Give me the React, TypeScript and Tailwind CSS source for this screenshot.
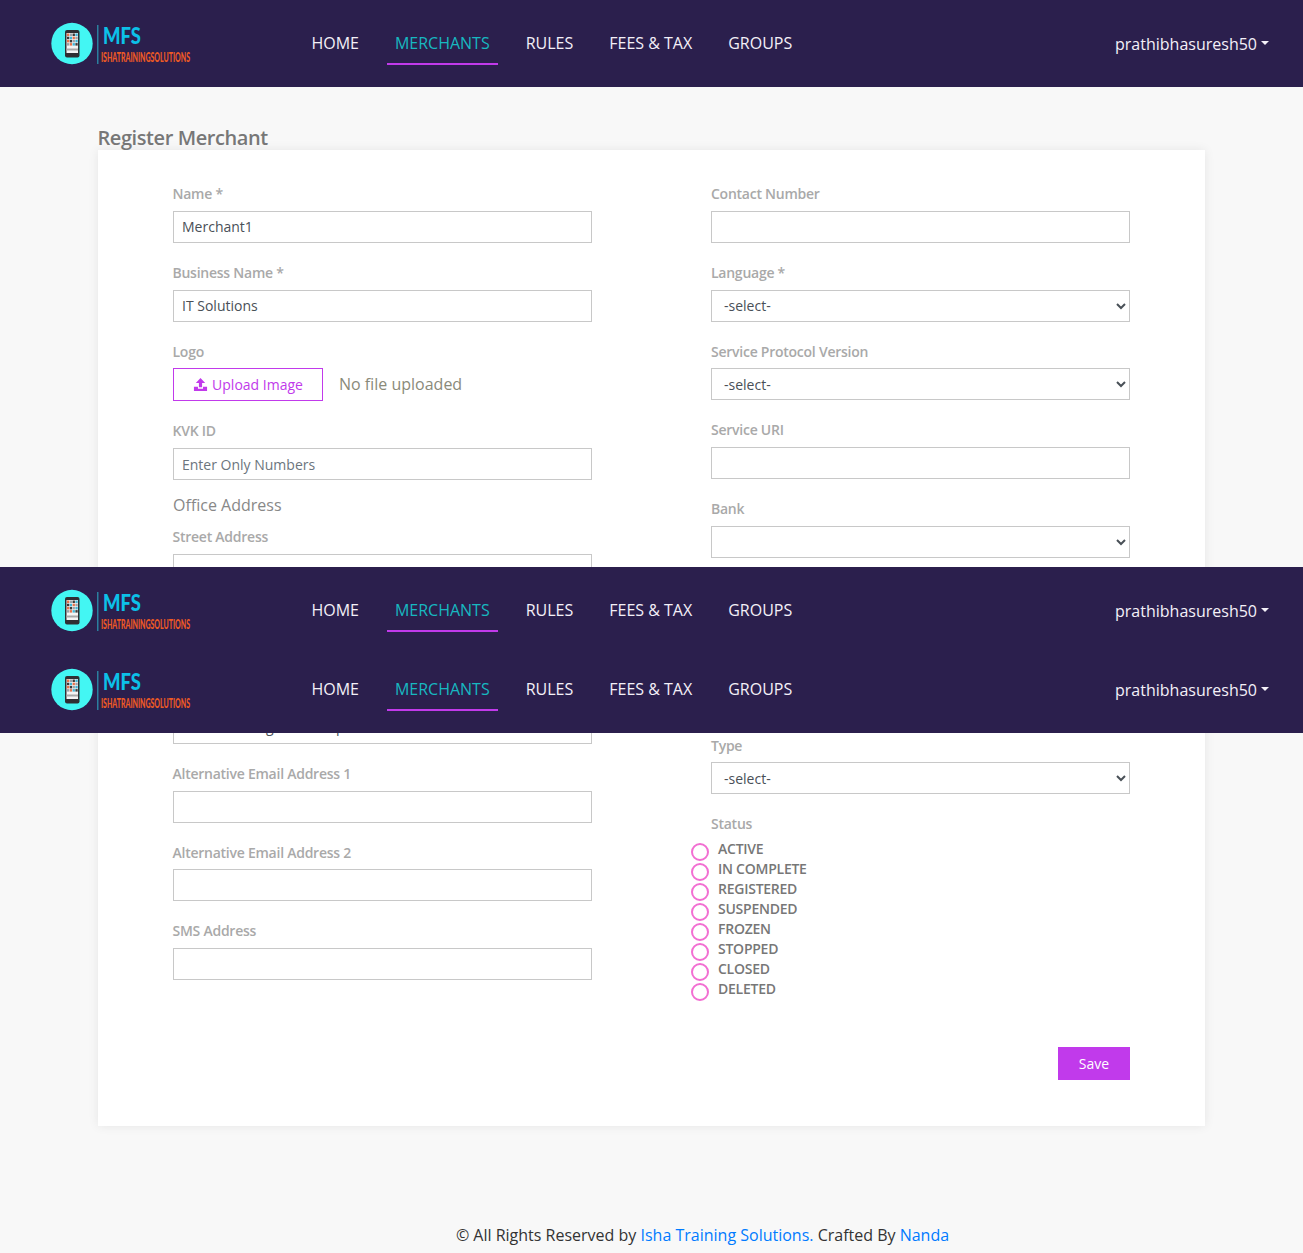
const font = { fontFamily: '"Open Sans", sans-serif' };

function Logo() {
  const colors = ['#e8724a', '#9aa3a8', '#3a3a3a', '#3fb6d8', '#3a3a3a', '#3fb6d8', '#e8724a', '#9aa3a8', '#e8724a', '#3a3a3a', '#9aa3a8', '#3fb6d8', '#9aa3a8', '#e8724a', '#3fb6d8', '#3a3a3a'];
  return (
    <svg width="200" height="44" viewBox="0 0 200 44" className="block">
      <circle cx="21" cy="21.5" r="20.7" fill="#43f6f3" />
      <rect x="14" y="8" width="14.5" height="27.5" rx="2" fill="#2f2f33" />
      <rect x="15.5" y="11" width="11.5" height="20" fill="#f4f4f4" />
      {colors.map((c, i) => (
        <rect key={i} x={16 + (i % 4) * 2.8} y={11.5 + Math.floor(i / 4) * 3.2} width="2.3" height="2.5" fill={c} />
      ))}
      <rect x="15.5" y="26.5" width="11.5" height="2" fill="#a8a8a8" />
      <rect x="46" y="3" width="1.5" height="39" fill="#2b7f9e" />
      <text x="52" y="22" fontFamily="Lato, sans-serif" fontWeight="900" fontSize="23" fill="#0cc0e8" textLength="38" lengthAdjust="spacingAndGlyphs">MFS</text>
      <text x="50" y="40" fontFamily="Lato, sans-serif" fontWeight="900" fontSize="12.5" fill="#ee5a24" textLength="89" lengthAdjust="spacingAndGlyphs">ISHATRAININGSOLUTIONS</text>
    </svg>
  );
}

function Navbar({ className }: { className: string }) {
  const items = ['HOME', 'MERCHANTS', 'RULES', 'FEES & TAX', 'GROUPS'];
  return (
    <div className={`flex items-start bg-[#2b1f4d] ${className}`}>
      <div className="ml-[51px] mt-[22px] w-[252.4px] shrink-0">
        <Logo />
      </div>
      <nav className="flex gap-5 mt-[21px]">
        {items.map((t) => (
          <a
            key={t}
            className={`block h-[44px] px-2 pt-[10px] text-[16px] leading-[24px] ${
              t === 'MERCHANTS' ? 'text-[#17b8c0] border-b-2 border-[#c13aeb]' : 'text-[#f4f0f8]'
            }`}
          >
            {t}
          </a>
        ))}
      </nav>
      <div className="ml-auto mr-[34px] mt-[32px] flex items-center text-[16px] leading-[24px] text-[#f4f0f8]">
        prathibhasuresh50
        <span className="ml-[4px] mb-[3px] border-x-[4px] border-t-[4px] border-x-transparent border-t-[#f4f0f8]" />
      </div>
    </div>
  );
}

function Label({ children, tight }: { children: React.ReactNode; tight?: boolean }) {
  return (
    <label className={`-ml-[0.5px] block h-[21px] text-[14px] leading-[21px] font-semibold tracking-[-0.25px] text-[#a9a9a9] ${tight ? 'mb-[6px]' : 'mb-[7px]'}`}>
      {children}
    </label>
  );
}

function Field({ label, value, placeholder, tight, lift }: { label: string; value?: string; placeholder?: string; tight?: boolean; lift?: string }) {
  return (
    <div className="mb-[19px]">
      <Label tight={tight}>{label}</Label>
      <input
        readOnly
        value={value ?? ''}
        placeholder={placeholder}
        className={`block w-full h-[32px] px-2 border border-[#c8c8c8] bg-white text-[14px] text-[#495057] placeholder:text-[#6c757d] outline-none ${lift ?? ''}`}
      />
    </div>
  );
}

function SelectField({ label, value, tight, lift }: { label: string; value?: string; tight?: boolean; lift?: string }) {
  return (
    <div className="mb-[19px]">
      <Label tight={tight}>{label}</Label>
      <select className={`block w-full h-[32px] px-2 border border-[#c8c8c8] bg-white text-[14px] text-[#495057] outline-none ${lift ?? ''}`} defaultValue={value ?? ''}>
        <option value={value ?? ''}>{value ?? ''}</option>
      </select>
    </div>
  );
}

export default function App() {
  const statuses = ['ACTIVE', 'IN COMPLETE', 'REGISTERED', 'SUSPENDED', 'FROZEN', 'STOPPED', 'CLOSED', 'DELETED'];
  return (
    <div style={font} className="relative h-[1253px] overflow-hidden bg-[#f8f8f8]">
      <Navbar className="h-[87px]" />
      <div className="mx-[98px] pt-[37px]">
        <h2 className="h-[26px] text-[20px] leading-[28px] font-semibold tracking-[-0.42px] text-[#777777] -ml-[0.5px]">Register Merchant</h2>
        <div className="h-[976px] bg-white shadow-[0_0_10px_rgba(0,0,0,0.08)] px-[75px] pt-[33px]">
          <div className="grid grid-cols-2 gap-x-[119px]">
            <div>
              <Field label="Name *" value="Merchant1" lift="pb-[2px]" />
              <Field label="Business Name *" value="IT Solutions" lift="pb-[2px]" />
              <div className="mb-[19px]">
                <Label tight>Logo</Label>
                <div className="flex items-center">
                  <button className="flex items-center justify-center w-[150px] h-[33px] border border-[#c13aeb] text-[14px] text-[#c13aeb]">
                    <svg width="15" height="15" viewBox="0 0 16 16" className="mr-[4px]" fill="#c13aeb">
                      <path d="M8 1 3 6.5H6.3V11H9.7V6.5H13Z" />
                      <path d="M1 10.5H5.3V12.5H10.7V10.5H15V15H1Z" />
                    </svg>
                    Upload Image
                  </button>
                  <span className="ml-4 text-[16px] text-[#8a8a7a] -translate-y-px">No file uploaded</span>
                </div>
              </div>
              <Field label="KVK ID" placeholder="Enter Only Numbers" />
              <div className="-mt-[6px] h-[33px] text-[16px] leading-[24px] text-[#888888]">Office Address</div>
              <Field label="Street Address" />
              <Field label="City" />
              <Field label="Email Address" value="Enter Building Fax Group" lift="pb-[4px]" />
              <Field label="Alternative Email Address 1" />
              <Field label="Alternative Email Address 2" tight />
              <Field label="SMS Address" />
            </div>
            <div className="[&_label]:ml-0">
              <Field label="Contact Number" />
              <SelectField label="Language *" value="-select-" lift="pb-[2px]" />
              <SelectField label="Service Protocol Version" value="-select-" tight />
              <Field label="Service URI" />
              <SelectField label="Bank" />
              <SelectField label="Currency" />
              <SelectField label="Category" />
              <SelectField label="Type" value="-select-" tight />
              <Label tight>Status</Label>
              <div className="-ml-[20px]">
                {statuses.map((s) => (
                  <div key={s} className="flex h-[20px] overflow-visible">
                    <span className="mt-[3px] h-[18px] w-[18px] shrink-0 rounded-full border-2 border-[#f26fd2] bg-white" />
                    <span className="ml-[9px] -mt-[1px] text-[14px] leading-[20px] font-semibold tracking-[-0.25px] text-[#777777]">{s}</span>
                  </div>
                ))}
              </div>
            </div>
          </div>
          <div className="flex justify-end mt-[47px]">
            <button className="w-[72px] h-[33px] bg-[#c13aeb] text-[14px] text-white">Save</button>
          </div>
        </div>
      </div>
      <div className="mt-[97px] pl-[102px] text-center text-[16px] leading-[24px] text-[#333333]">
        © All Rights Reserved by <a className="text-[#007bff]">Isha Training Solutions.</a> Crafted By <a className="text-[#007bff]">Nanda</a>
      </div>
      <div className="absolute left-0 right-0 top-[567px]">
        <Navbar className="h-[79px]" />
        <Navbar className="h-[87px]" />
      </div>
    </div>
  );
}
